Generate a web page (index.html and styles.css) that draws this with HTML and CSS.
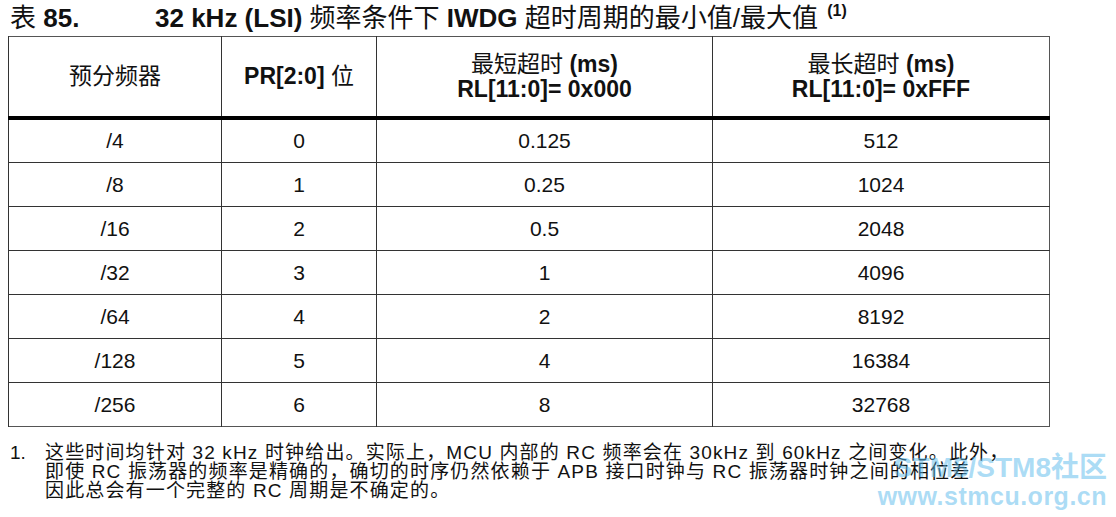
FILE: index.html
```html
<!DOCTYPE html>
<html lang="zh">
<head>
<meta charset="utf-8">
<link rel="stylesheet" href="styles.css">
</head>
<body>
<div class="page">
  <div class="title">
    <span class="tlabel">表 <b>85.</b></span>
    <span class="ttext"><b>32 kHz (LSI)</b> 频率条件下 <b>IWDG</b> 超时周期的最小值/最大值 <sup class="tnote">(1)</sup></span>
  </div>
  <table class="tbl">
    <colgroup>
      <col class="c1"><col class="c2"><col class="c3"><col class="c4">
    </colgroup>
    <thead>
      <tr>
        <th>预分频器</th>
        <th><b>PR[2:0]</b> 位</th>
        <th>最短超时 <b>(ms)</b><br><b>RL[11:0]= 0x000</b></th>
        <th>最长超时 <b>(ms)</b><br><b>RL[11:0]= 0xFFF</b></th>
      </tr>
    </thead>
    <tbody>
      <tr><td>/4</td><td>0</td><td>0.125</td><td>512</td></tr>
      <tr><td>/8</td><td>1</td><td>0.25</td><td>1024</td></tr>
      <tr><td>/16</td><td>2</td><td>0.5</td><td>2048</td></tr>
      <tr><td>/32</td><td>3</td><td>1</td><td>4096</td></tr>
      <tr><td>/64</td><td>4</td><td>2</td><td>8192</td></tr>
      <tr><td>/128</td><td>5</td><td>4</td><td>16384</td></tr>
      <tr><td>/256</td><td>6</td><td>8</td><td>32768</td></tr>
    </tbody>
  </table>
  <div class="note">
    <span class="nnum">1.</span>
    <p class="ntext">这些时间均针对 32 kHz 时钟给出。实际上，MCU 内部的 RC 频率会在 30kHz 到 60kHz 之间变化。此外，<br>即使 RC 振荡器的频率是精确的，确切的时序仍然依赖于 APB 接口时钟与 RC 振荡器时钟之间的相位差<br>因此总会有一个完整的 RC 周期是不确定的。</p>
  </div>
  <div class="wm">
    <div class="wm1">STM8/STM8社区</div>
    <div class="wm2">www.stmcu.org.cn</div>
  </div>
</div>
</body>
</html>
```

FILE: styles.css
```css
html, body {
  margin: 0;
  padding: 0;
  background: #fff;
}
.page {
  position: relative;
  width: 1116px;
  height: 517px;
  overflow: hidden;
  font-family: "Liberation Sans", "Noto Sans CJK SC", sans-serif;
  color: #111;
}
.title {
  display: flex;
  align-items: baseline;
  padding: 4px 0 0 10px;
  height: 32px;
  font-size: 26px;
  line-height: 28px;
}
.tlabel {
  width: 145px;
  flex: none;
}
.tnote {
  font-size: 16px;
  font-weight: bold;
  vertical-align: 11px;
  line-height: 0;
  margin-left: 2px;
}
.tbl {
  margin-left: 8px;
  width: 1041px;
  border-collapse: collapse;
  border: 1px solid #555;
  font-size: 21px;
  table-layout: fixed;
}
.c1 { width: 213px; }
.c2 { width: 155px; }
.c3 { width: 336px; }
.c4 { width: 337px; }
.tbl th {
  font-weight: normal;
  font-size: 23px;
  height: 79px;
  padding: 0;
  line-height: 25px;
  border-left: 1.5px solid #333;
  border-bottom: 4px solid #000;
  text-align: center;
  vertical-align: middle;
}
.tbl td {
  height: 43px;
  padding: 0;
  border-left: 1.5px solid #333;
  border-top: 1px solid #333;
  text-align: center;
  vertical-align: middle;
  line-height: 24px;
}
.tbl tbody tr:first-child td {
  height: 42px;
}
.note {
  display: flex;
  padding: 16px 0 0 10px;
  font-size: 19px;
  line-height: 19px;
}
.nnum {
  width: 35px;
  flex: none;
}
.ntext {
  margin: 0;
  letter-spacing: 1.15px;
}
.wm {
  position: absolute;
  right: 9px;
  top: 452px;
  text-align: right;
  font-weight: bold;
  color: rgba(90, 185, 235, 0.5);
}
.wm1 {
  font-size: 28px;
  line-height: 31px;
}
.wm2 {
  font-size: 25px;
  line-height: 26px;
  letter-spacing: 0.5px;
}
```
